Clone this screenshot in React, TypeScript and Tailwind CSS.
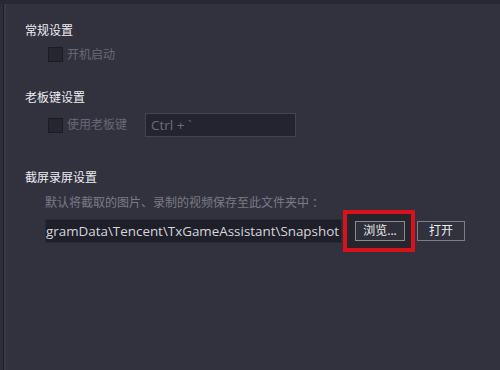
export default function App() {
  const cjk = { fontFamily: '"Noto Sans", "Noto Sans CJK SC", sans-serif' }

  return (
    <div
      className="w-[500px] h-[370px] bg-[#32323f] flex flex-col overflow-hidden"
      style={cjk}
    >
      <div className="h-[4px] bg-[#282835] shrink-0" />
      <div className="flex flex-1">
        <div className="w-[3px] bg-[#2e2e3b]" />
        <div className="w-[1px] bg-[#1d1d28]" />
        <div className="w-[2px] bg-[#393947]" />

        <div className="flex-1 flex flex-col pl-[19px] pt-[19px]">
          {/* 常规设置 */}
          <div className="text-[12px] leading-4 text-[#ececf0]">常规设置</div>
          <div className="mt-[8px] ml-[23px] flex items-center h-[15px]">
            <div className="w-[15px] h-[15px] bg-[#262631] border border-[#1b1b25]" />
            <span className="ml-[4px] text-[12px] leading-4 text-[#696976]">开机启动</span>
          </div>

          {/* 老板键设置 */}
          <div className="mt-[28px] text-[12px] leading-4 text-[#ececf0]">老板键设置</div>
          <div className="mt-[7px] ml-[23px] flex items-center h-[24px]">
            <div className="w-[15px] h-[15px] bg-[#262631] border border-[#1b1b25]" />
            <span className="ml-[4px] text-[12px] leading-4 text-[#696976]">使用老板键</span>
            <div className="ml-[18px] w-[151px] h-[24px] border border-[#434351] bg-[#242430] flex items-center pl-[5px]">
              <span className="text-[13.5px] text-[#6c6c78]" style={{ fontFamily: '"Open Sans", sans-serif' }}>
                Ctrl + `
              </span>
            </div>
          </div>

          {/* 截屏录屏设置 */}
          <div className="mt-[33px] text-[12px] leading-4 text-[#ececf0]">截屏录屏设置</div>
          <div className="mt-[9px] ml-[20px] text-[12px] leading-4 text-[#7a7a86]">
            默认将截取的图片、录制的视频保存至此文件夹中 ：
          </div>
          <div className="mt-[8px] ml-[20px] flex items-center h-[24px]">
            <div className="w-[297px] h-[24px] bg-[#1f1f29] border border-[#2a2a35] flex items-center justify-end overflow-hidden pr-[2px]">
              <span
                className="text-[13.4px] text-[#d6d6dd] whitespace-nowrap"
                style={{ fontFamily: '"Open Sans", sans-serif' }}
              >
                gramData\Tencent\TxGameAssistant\Snapshot
              </span>
            </div>
            <div className="ml-[1px] w-[72px] h-[42px] shrink-0 border-4 border-[#d8121b] bg-[#25252e] flex items-center pl-[8px]">
              <button className="w-[50px] h-[20px] border border-[#8a8a95] bg-[#2f2f3a] text-[12px] leading-none text-[#ececf0]">
                浏览...
              </button>
            </div>
            <button className="ml-[2px] w-[48px] h-[20px] border border-[#7e7e89] bg-[#32323f] text-[12px] leading-none text-[#ececf0]">
              打开
            </button>
          </div>
        </div>
      </div>
    </div>
  )
}
